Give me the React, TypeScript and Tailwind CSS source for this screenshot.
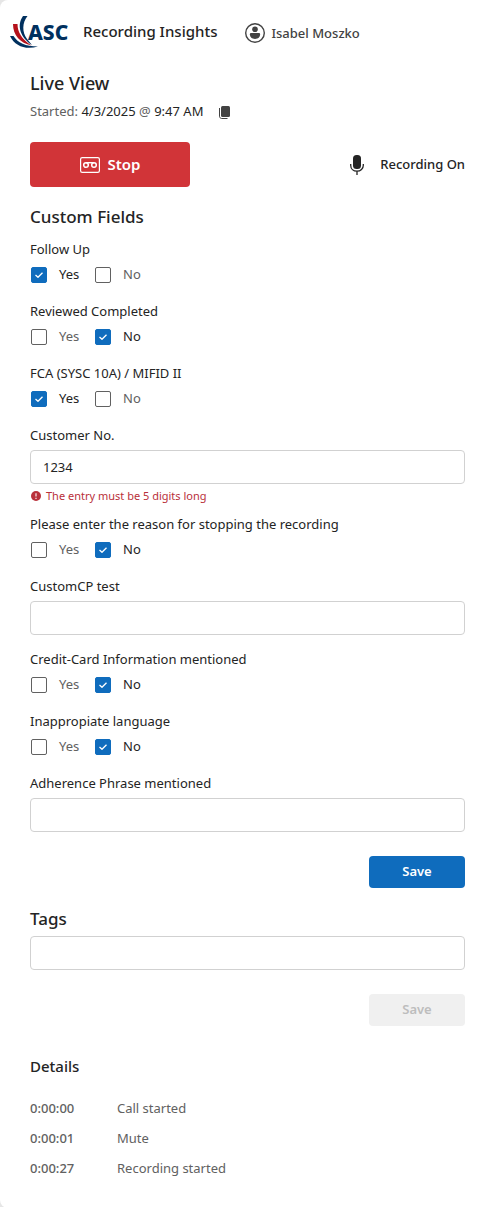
import React, { useState } from "react";

type Answer = "yes" | "no";

interface YesNoFieldProps {
  label: string;
  value: Answer;
  onChange: (value: Answer) => void;
}

interface TextFieldProps {
  id: string;
  label: string;
  value: string;
  error?: string;
  onChange: (value: string) => void;
}

const events = [
  { time: "0:00:00", text: "Call started" },
  { time: "0:00:01", text: "Mute" },
  { time: "0:00:27", text: "Recording started" },
];

function Logo() {
  return (
    <svg width="58" height="34" viewBox="0 0 58 34" role="img" aria-label="ASC">
      <path d="M13 0h4.5C12 7 12 16 17 23l5 6C11 22 6 10 13 0Z" fill="#00305e" />
      <path d="M3 8h4.500c0 8 4 15 14 21.500C10 27 3 19 3 8Z" fill="#b5121b" />
      <path d="M0 20h3.500c4 6.500 12 10.500 24.500 10.500-12 3.500-23 0-28-10.500Z" fill="#00305e" />
      <text
        x="18"
        y="24"
        fill="#00305e"
        className="font-['Noto_Sans',sans-serif] text-[21px] font-extrabold"
      >
        ASC
      </text>
    </svg>
  );
}

function UserIcon() {
  return (
    <svg width="20" height="20" viewBox="0 0 20 20" fill="#424242" aria-hidden="true">
      <circle cx="10" cy="10" r="9.3" fill="none" stroke="#424242" strokeWidth="1.4" />
      <circle cx="10" cy="6.3" r="2.8" />
      <path d="M6.2 10h7.6c.8 0 1.3.5 1.3 1.3 0 2.8-2.1 4.7-5.1 4.7s-5.1-1.9-5.1-4.7c0-.8.5-1.3 1.3-1.3Z" />
    </svg>
  );
}

function CopyIcon() {
  return (
    <svg width="11" height="13" viewBox="0 0 11 13" aria-hidden="true">
      <rect x="2" width="9" height="11" rx="1.5" fill="#424242" />
      <path d="M.5 2v8.2c0 1.3.9 2.3 2.2 2.3h5.8" fill="none" stroke="#424242" />
    </svg>
  );
}

function TapeIcon() {
  return (
    <svg width="20" height="16" viewBox="0 0 20 16" fill="none" stroke="#fff" aria-hidden="true">
      <rect x=".6" y=".6" width="18.8" height="14.8" rx="1.6" strokeWidth="1.2" />
      <circle cx="6" cy="8" r="2.3" strokeWidth="1.5" />
      <circle cx="14" cy="8" r="2.3" strokeWidth="1.5" />
      <path d="M6 5.7h8" strokeWidth="1.4" />
    </svg>
  );
}

function MicIcon() {
  return (
    <svg width="14" height="20" viewBox="0 0 14 20" aria-hidden="true">
      <rect x="3" width="8" height="14" rx="3.5" fill="#242424" />
      <path
        d="M.7 9v1.2c0 3.4 2.6 5.9 6.3 5.9s6.3-2.5 6.3-5.9V9M7 16v4"
        fill="none"
        stroke="#242424"
        strokeWidth="1.3"
      />
    </svg>
  );
}

function ErrorIcon() {
  return (
    <svg width="10" height="10" viewBox="0 0 10 10" aria-hidden="true">
      <circle cx="5" cy="5" r="5" fill="#b9303a" />
      <path d="M5 2.2v3.2M5 6.7v1.2" stroke="#fff" strokeWidth="1.1" />
    </svg>
  );
}

function Option({ text, checked, onChange }: { text: string; checked: boolean; onChange: () => void }) {
  return (
    <label className={`flex w-16 items-center gap-3 ${checked ? "text-[#242424]" : "text-[#616161]"}`}>
      <span className="grid shrink-0 place-items-center">
        <input
          type="checkbox"
          checked={checked}
          onChange={onChange}
          className="col-start-1 row-start-1 size-4 appearance-none rounded-xs border border-[#616161] bg-white checked:border-[#0f6cbd] checked:bg-[#0f6cbd]"
        />
        {checked && (
          <svg
            width="8"
            height="6"
            viewBox="0 0 8 6"
            className="pointer-events-none col-start-1 row-start-1"
            aria-hidden="true"
          >
            <path d="M.5 3 3 5.3 7.5.7" fill="none" stroke="#fff" strokeWidth="1.3" />
          </svg>
        )}
      </span>
      {text}
    </label>
  );
}

const YesNoField: React.FC<YesNoFieldProps> = ({ label, value, onChange }) => {
  return (
    <fieldset className="mb-2.5">
      <legend className="leading-5">{label}</legend>
      <div className="flex h-8 items-center pl-px">
        <Option text="Yes" checked={value === "yes"} onChange={() => onChange("yes")} />
        <Option text="No" checked={value === "no"} onChange={() => onChange("no")} />
      </div>
    </fieldset>
  );
};

const inputClass = "block h-[34px] w-full rounded border border-[#d1d1d1] bg-white px-3 outline-none";

const TextField: React.FC<TextFieldProps> = ({ id, label, value, error, onChange }) => {
  return (
    <div className="mb-2.5">
      <label htmlFor={id} className="mb-[5px] block leading-5">
        {label}
      </label>
      <input
        id={id}
        type="text"
        value={value}
        onChange={(e) => onChange(e.target.value)}
        className={inputClass}
      />
      <div className="pt-1">
        {error && (
          <p className="flex items-center gap-[5px] pl-px text-[11px] leading-4 text-[#b9303a]">
            <ErrorIcon />
            {error}
          </p>
        )}
      </div>
    </div>
  );
};

export default function App() {
  const [followUp, setFollowUp] = useState<Answer>("yes");
  const [reviewed, setReviewed] = useState<Answer>("no");
  const [fca, setFca] = useState<Answer>("yes");
  const [customerNo, setCustomerNo] = useState("1234");
  const [stopReason, setStopReason] = useState<Answer>("no");
  const [customCp, setCustomCp] = useState("");
  const [creditCard, setCreditCard] = useState<Answer>("no");
  const [language, setLanguage] = useState<Answer>("no");
  const [adherence, setAdherence] = useState("");
  const [tags, setTags] = useState("");

  const customerError = /^\d{5}$/.test(customerNo) ? undefined : "The entry must be 5 digits long";

  return (
    <div className="bg-[#e6e6e6] font-['Noto_Sans','Open_Sans',sans-serif] text-[13px] text-[#242424]">
      <div className="min-h-screen rounded-l-lg bg-white pb-6">
        <header className="flex h-[66px] items-center pl-2.5">
          <Logo />
          <h1 className="ml-[15px] pb-1 text-[15px] font-medium">Recording Insights</h1>
          <div className="ml-7 flex items-center gap-1.5 font-medium text-[#424242]">
            <UserIcon />
            <span className="pt-0.5">Isabel Moszko</span>
          </div>
        </header>

        <main className="pr-[29px] pl-[30px]">
          <h2 className="pt-[3px] text-lg leading-7 font-medium">Live View</h2>
          <div className="mt-[5px] flex h-5 items-center">
            <p className="text-[#616161]">
              Started: <span className="text-[#242424]">4/3/2025</span> @{" "}
              <span className="text-[#242424]">9:47 AM</span>
            </p>
            <button type="button" aria-label="Copy" className="ml-4">
              <CopyIcon />
            </button>
          </div>

          <div className="mt-5 flex items-center justify-between">
            <button
              type="button"
              className="flex h-[45px] w-40 items-center justify-center gap-2 rounded bg-[#d13438] text-[15px] font-semibold text-white"
            >
              <TapeIcon />
              Stop
            </button>
            <div className="flex items-center gap-4 font-medium">
              <MicIcon />
              Recording On
            </div>
          </div>

          <h2 className="mt-4 mb-2 text-[17px] leading-7 font-medium">Custom Fields</h2>
          <form onSubmit={(e) => e.preventDefault()}>
            <YesNoField label="Follow Up" value={followUp} onChange={setFollowUp} />
            <YesNoField label="Reviewed Completed" value={reviewed} onChange={setReviewed} />
            <YesNoField label="FCA (SYSC 10A) / MIFID II" value={fca} onChange={setFca} />
            <TextField
              id="customer-no"
              label="Customer No."
              value={customerNo}
              error={customerError}
              onChange={setCustomerNo}
            />
            <YesNoField
              label="Please enter the reason for stopping the recording"
              value={stopReason}
              onChange={setStopReason}
            />
            <TextField id="custom-cp" label="CustomCP test" value={customCp} onChange={setCustomCp} />
            <YesNoField label="Credit-Card Information mentioned" value={creditCard} onChange={setCreditCard} />
            <YesNoField label="Inappropiate language" value={language} onChange={setLanguage} />
            <TextField id="adherence" label="Adherence Phrase mentioned" value={adherence} onChange={setAdherence} />
            <div className="flex justify-end pt-2.5">
              <button type="submit" className="h-8 w-24 rounded bg-[#0f6cbd] font-semibold text-white">
                Save
              </button>
            </div>
          </form>

          <form onSubmit={(e) => e.preventDefault()}>
            <h2 className="mt-[18px] mb-1 text-[17px] leading-[26px] font-medium">
              <label htmlFor="tags">Tags</label>
            </h2>
            <input
              id="tags"
              type="text"
              value={tags}
              onChange={(e) => setTags(e.target.value)}
              className={inputClass}
            />
            <div className="mt-6 flex justify-end">
              <button
                type="submit"
                disabled={!tags}
                className="h-8 w-24 rounded bg-[#0f6cbd] font-semibold text-white disabled:bg-[#f0f0f0] disabled:text-[#bdbdbd]"
              >
                Save
              </button>
            </div>
          </form>

          <h2 className="mt-7 mb-4 text-[15px] leading-6 font-medium">Details</h2>
          <table className="text-[#616161]">
            <tbody>
              {events.map((event) => (
                <tr key={event.time} className="h-[30px]">
                  <th scope="row" className="w-[87px] text-left font-medium">
                    {event.time}
                  </th>
                  <td>{event.text}</td>
                </tr>
              ))}
            </tbody>
          </table>
        </main>
      </div>
    </div>
  );
}
